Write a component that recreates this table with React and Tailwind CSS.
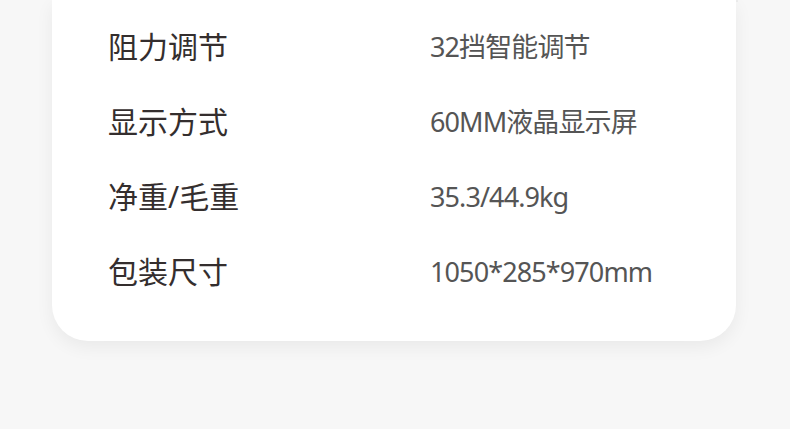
const specs = [
  { label: '阻力调节', value: '32挡智能调节' },
  { label: '显示方式', value: '60MM液晶显示屏' },
  { label: '净重/毛重', value: '35.3/44.9kg' },
  { label: '包装尺寸', value: '1050*285*970mm' },
];

export default function App() {
  return (
    <div
      className="h-[429px] w-[790px] overflow-hidden bg-[#f7f7f7] px-[52px]"
      style={{ fontFamily: '"Noto Sans", "Noto Sans CJK SC", sans-serif' }}
    >
      <div className="border-t-2 border-[#ececec]">
        <div className="-mt-[2px] w-[684px] rounded-b-[36px] bg-white pb-[32px] pl-[56px] pt-[9px] shadow-[0_6px_18px_rgba(0,0,0,0.06)]">
          {specs.map((row) => (
            <div key={row.label} className="flex h-[75px] items-center">
              <span className="w-[322px] text-[30px] leading-none text-[#342e2e]">{row.label}</span>
              <span className="text-[27px] leading-none tracking-[-0.9px] text-[#555555]">{row.value}</span>
            </div>
          ))}
        </div>
      </div>
    </div>
  );
}
